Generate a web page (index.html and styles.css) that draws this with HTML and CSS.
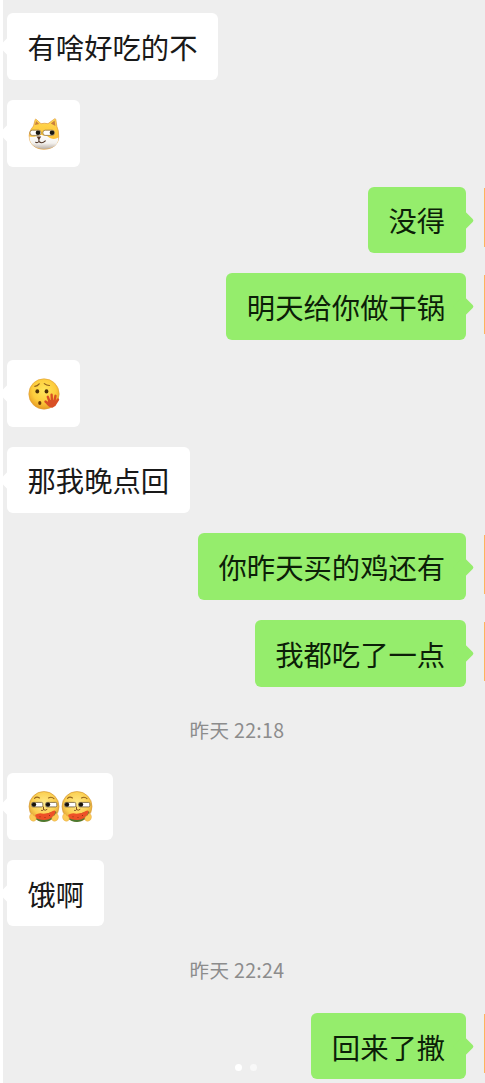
FILE: index.html
```html
<!DOCTYPE html>
<html lang="zh-CN">
<head>
<meta charset="utf-8">
<title>聊天</title>
<link rel="stylesheet" href="styles.css">
</head>
<body>
<svg class="defs" width="0" height="0" aria-hidden="true">
  <defs>
    <radialGradient id="skin" cx=".5" cy=".38" r=".64">
      <stop offset="0" stop-color="#ffe65a"/><stop offset=".6" stop-color="#fdcc3c"/><stop offset="1" stop-color="#e59520"/>
    </radialGradient>
    <radialGradient id="pale" cx=".5" cy=".4" r=".64">
      <stop offset="0" stop-color="#ffeb8c"/><stop offset=".6" stop-color="#fbd052"/><stop offset="1" stop-color="#d99429"/>
    </radialGradient>
    <linearGradient id="fur" x1="0" y1="0" x2="0" y2="1">
      <stop offset="0" stop-color="#ffda50"/><stop offset="1" stop-color="#fdb52a"/>
    </linearGradient>
    <linearGradient id="muzzle" x1="0" y1="0" x2="0" y2="1">
      <stop offset="0" stop-color="#fff"/><stop offset=".6" stop-color="#f3f1ee"/><stop offset="1" stop-color="#b9aea4"/>
    </linearGradient>
    <symbol id="doge" viewBox="0 0 32 32">
      <path d="M1.200 17.500C1.300 13 4 10 5.500 8L7.200 1.500Q7.600 .8 8.400 1.500L13 5.700Q16.500 4.800 20 5.700L26.500 .9Q27.500 .4 27.800 1.600L28.900 8.500Q31 12.500 30.700 19C30.400 27 24 31.200 16 31.200S1.200 27 1.200 17.500Z" fill="url(#fur)" stroke="#e0993a" stroke-width=".7"/>
      <path d="M6.900 7L8.100 3L11.200 6.100ZM22.800 5.600L26.600 2.600L27.400 8Z" fill="#c9803d"/>
      <path d="M1.500 18.500C5 19.300 9 18.600 12 16.500Q15 17.800 19 18C23 21.500 27 21.700 30.300 19.500C31 26.500 25 31 16 31S1 26 1.500 18.500Z" fill="url(#muzzle)"/>
      <rect x="2" y="12.200" width="11" height="5.200" rx="2.300" fill="#fff" stroke="#8f7445" stroke-width=".8"/>
      <rect x="14.900" y="12.200" width="11.600" height="5.200" rx="2.300" fill="#fff" stroke="#8f7445" stroke-width=".8"/>
      <circle cx="10" cy="14.800" r="2.300" fill="#171510"/><circle cx="24" cy="14.800" r="2.300" fill="#171510"/>
      <path d="M8.500 18.500H13.200L11.500 21.200H10.300Z" fill="#5b3925"/>
      <path d="M10.900 20.500V23.500Q9.500 25.200 7.600 24.300M10.900 23.500Q14 26.300 17.300 22.800" fill="none" stroke="#54392a" stroke-width="1.100" stroke-linecap="round"/>
    </symbol>
    <symbol id="yawn" viewBox="0 0 32 32">
      <circle cx="16" cy="16" r="15.200" fill="url(#skin)" stroke="#dda03e" stroke-width=".6"/>
      <path d="M6.800 8.300Q9.500 8 11.200 5.800M16.300 5.600Q18.500 7.500 21.500 7.500" fill="none" stroke="#92601c" stroke-width="1.200" stroke-linecap="round"/>
      <ellipse cx="9.300" cy="13.400" rx="1.900" ry="2.100" fill="#4d3008"/><ellipse cx="18.500" cy="13.400" rx="1.900" ry="2.100" fill="#4d3008"/>
      <ellipse cx="11.800" cy="25" rx="1.600" ry="1.900" fill="#6d3b08"/>
      <path d="M21.500 27L17.500 23.500M22 25L19.800 18.800M24 24L23.600 16.800M26 25L27.500 17.800M26.500 27L30 21.500" fill="none" stroke="#d94f25" stroke-width="2.400" stroke-linecap="round"/>
      <path d="M20 23Q24 20.500 28 23.500Q28 28.500 24.500 29.700Q21 29.500 18.500 26Z" fill="#d94f25"/>
    </symbol>
    <symbol id="melon" viewBox="0 0 32 32">
      <circle cx="16" cy="15.500" r="15" fill="url(#pale)" stroke="#d0902f" stroke-width=".6"/>
      <path d="M6.500 7.300Q8.700 5.200 11.500 7M20.500 7Q23.500 5.200 26 7.600" fill="none" stroke="#94631d" stroke-width="1.100" stroke-linecap="round"/>
      <rect x="3.600" y="11.400" width="11.200" height="4.500" rx="1.300" fill="#fff" stroke="#6f5a38" stroke-width=".8"/>
      <rect x="17.600" y="11.400" width="11.200" height="4.500" rx="1.300" fill="#fff" stroke="#6f5a38" stroke-width=".8"/>
      <circle cx="6" cy="13.600" r="2.200" fill="#17120b"/><circle cx="20" cy="13.600" r="2.200" fill="#17120b"/>
      <path d="M15.500 16V18.500Q15 20 13.500 19.500M15.500 18.700Q17.500 20 19 18.500" fill="none" stroke="#85501b" stroke-width="1" stroke-linecap="round"/>
      <path d="M7 27Q10 31 16 31Q25 30.500 28.500 21L26.500 20Z" fill="#4a7932"/>
      <path d="M7.300 23.700Q11 21.300 15.500 22.700Q21.500 22.500 25.500 19.700Q27.800 19 27.600 21.500Q24.500 28.700 16.500 29Q9.500 29 7.300 26.300Z" fill="#ed5127"/>
      <path d="M12 25.500v.7M17 26v.7M21.500 24v.7" stroke="#71240e" stroke-width="1"/>
      <path d="M3 22.800Q4.700 22 5.600 24.500Q8.500 25.500 8.300 28Q7.500 30.700 5 30.300Q1.500 29.300 1.500 26Q1.600 23.500 3 22.800Z" fill="#fccb55" stroke="#d89a3d" stroke-width=".35"/>
      <path d="M29 22.800Q27.300 22 26.400 24.500Q23.500 25.500 23.700 28Q24.500 30.700 27 30.300Q30.500 29.300 30.500 26Q30.400 23.500 29 22.800Z" fill="#fccb55" stroke="#d89a3d" stroke-width=".35"/>
    </symbol>
  </defs>
</svg>
<main class="chat">
  <div class="row"><div class="bubble">有啥好吃的不</div></div>
  <div class="row"><div class="bubble"><svg class="emoji"><use href="#doge"/></svg></div></div>
  <div class="row mine"><div class="bubble">没得</div><i class="avatar"></i></div>
  <div class="row mine"><div class="bubble">明天给你做干锅</div><i class="avatar"></i></div>
  <div class="row"><div class="bubble"><svg class="emoji"><use href="#yawn"/></svg></div></div>
  <div class="row"><div class="bubble">那我晚点回</div></div>
  <div class="row mine"><div class="bubble">你昨天买的鸡还有</div><i class="avatar"></i></div>
  <div class="row mine"><div class="bubble">我都吃了一点</div><i class="avatar"></i></div>
  <time class="time">昨天 22:18</time>
  <div class="row"><div class="bubble"><svg class="emoji"><use href="#melon"/></svg><svg class="emoji"><use href="#melon"/></svg></div></div>
  <div class="row"><div class="bubble">饿啊</div></div>
  <time class="time">昨天 22:24</time>
  <div class="row mine"><div class="bubble">回来了撒</div><i class="avatar"></i></div>
  <div class="pager"><i class="dot active"></i><i class="dot"></i></div>
</main>
</body>
</html>
```
FILE: styles.css
```css
* { box-sizing: border-box; }
body {
  margin: 0;
  background: #eee;
  font-family: "Noto Sans CJK SC", sans-serif;
  color: #191919;
}
.defs { position: absolute; }
.chat {
  position: relative;
  display: flex;
  flex-direction: column;
  gap: 20px;
  width: 485px;
  height: 1083px;
  padding-top: 13.2px;
  border-left: 3px solid #fff;
  overflow: hidden;
}
.row {
  display: flex;
  flex: none;
  height: 66.7px;
  padding-left: 4px;
}
.bubble {
  position: relative;
  display: flex;
  align-items: center;
  gap: 1.500px;
  padding: 0 20.300px 0 20.500px;
  border-radius: 6px;
  background: #fff;
  font-size: 28.350px;
  line-height: 41px;
  white-space: nowrap;
}
.bubble::before {
  content: "";
  position: absolute;
  top: 26.200px;
  left: -5.300px;
  width: 15px;
  height: 15px;
  border-radius: 2px;
  background: inherit;
  transform: rotate(45deg);
}
.mine { justify-content: flex-end; padding-left: 0; }
.mine .bubble { background: #95ed6c; color: #0c1f08; }
.mine .bubble::before { left: auto; right: -5.300px; }
.avatar {
  width: 1.500px;
  height: 59px;
  margin: 1.500px 0 0 18px;
  background: #ffb35c;
}
.emoji { flex: none; width: 32px; height: 32px; margin-top: 2px; }
.time {
  display: flex;
  flex: none;
  align-items: center;
  justify-content: center;
  height: 46.300px;
  padding-right: 14px;
  font-size: 19.500px;
  letter-spacing: .35px;
  color: #8c8c8c;
}
.pager {
  position: absolute;
  left: 232px;
  top: 1064px;
  display: flex;
  gap: 8px;
}
.dot { width: 7px; height: 7px; border-radius: 50%; background: #f8f8f8; }
.dot.active { background: #fff; }
```
